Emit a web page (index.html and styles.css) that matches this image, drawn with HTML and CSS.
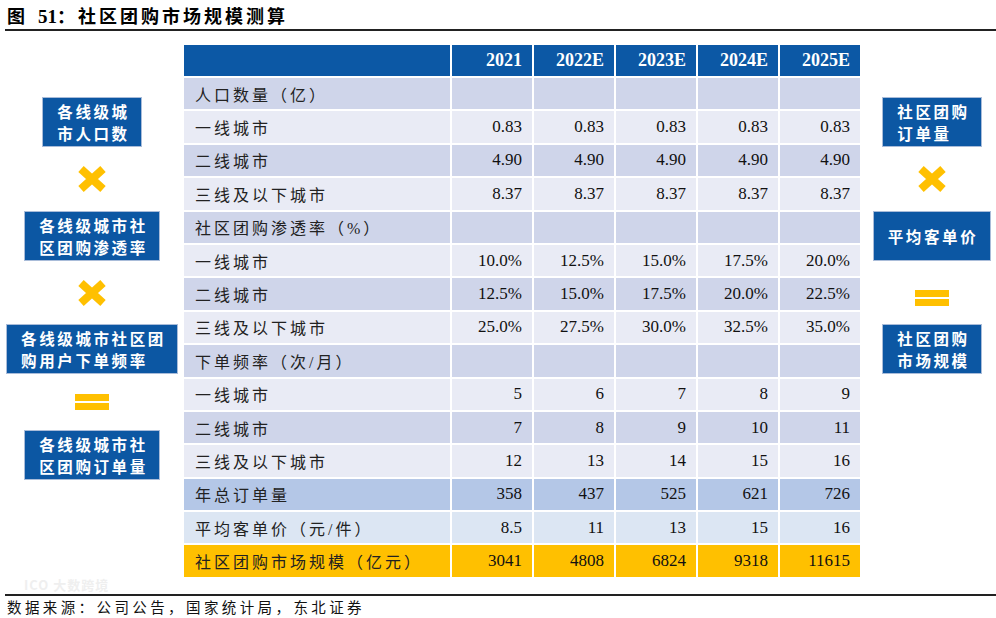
FILE: index.html
```html
<!DOCTYPE html>
<html lang="zh-CN">
<head>
<meta charset="utf-8">
<title>社区团购市场规模测算</title>
<link rel="stylesheet" href="styles.css">
</head>
<body>
<div class="page">
  <div class="title"><span class="t-cjk">图</span><span class="t-num">51</span><span class="t-cjk">：社区团购市场规模测算</span></div>
  <div class="main">
    <div class="side left">
      <div class="box">各线级城<br>市人口数</div>
      <div class="slot s64"><svg class="cross" width="30" height="28" viewBox="0 0 30 28"><path d="M4 4L26 24M26 4L4 24"/></svg></div>
      <div class="box">各线级城市社<br>区团购渗透率</div>
      <div class="slot s63"><svg class="cross" width="30" height="28" viewBox="0 0 30 28"><path d="M4 4L26 24M26 4L4 24"/></svg></div>
      <div class="box">各线级城市社区团<br>购用户下单频率</div>
      <div class="slot s56"><div class="eq"><i></i><i></i></div></div>
      <div class="box">各线级城市社<br>区团购订单量</div>
    </div>

    <div class="tbl">
      <div class="row head"><div class="c lab"></div><div class="c">2021</div><div class="c">2022E</div><div class="c">2023E</div><div class="c">2024E</div><div class="c">2025E</div></div>
      <div class="row dk"><div class="c lab">人口数量（亿）</div><div class="c"></div><div class="c"></div><div class="c"></div><div class="c"></div><div class="c"></div></div>
      <div class="row lt"><div class="c lab">一线城市</div><div class="c">0.83</div><div class="c">0.83</div><div class="c">0.83</div><div class="c">0.83</div><div class="c">0.83</div></div>
      <div class="row dk"><div class="c lab">二线城市</div><div class="c">4.90</div><div class="c">4.90</div><div class="c">4.90</div><div class="c">4.90</div><div class="c">4.90</div></div>
      <div class="row lt"><div class="c lab">三线及以下城市</div><div class="c">8.37</div><div class="c">8.37</div><div class="c">8.37</div><div class="c">8.37</div><div class="c">8.37</div></div>
      <div class="row dk"><div class="c lab">社区团购渗透率（%）</div><div class="c"></div><div class="c"></div><div class="c"></div><div class="c"></div><div class="c"></div></div>
      <div class="row lt"><div class="c lab">一线城市</div><div class="c">10.0%</div><div class="c">12.5%</div><div class="c">15.0%</div><div class="c">17.5%</div><div class="c">20.0%</div></div>
      <div class="row dk"><div class="c lab">二线城市</div><div class="c">12.5%</div><div class="c">15.0%</div><div class="c">17.5%</div><div class="c">20.0%</div><div class="c">22.5%</div></div>
      <div class="row lt"><div class="c lab">三线及以下城市</div><div class="c">25.0%</div><div class="c">27.5%</div><div class="c">30.0%</div><div class="c">32.5%</div><div class="c">35.0%</div></div>
      <div class="row dk"><div class="c lab">下单频率（次/月）</div><div class="c"></div><div class="c"></div><div class="c"></div><div class="c"></div><div class="c"></div></div>
      <div class="row lt"><div class="c lab">一线城市</div><div class="c">5</div><div class="c">6</div><div class="c">7</div><div class="c">8</div><div class="c">9</div></div>
      <div class="row dk"><div class="c lab">二线城市</div><div class="c">7</div><div class="c">8</div><div class="c">9</div><div class="c">10</div><div class="c">11</div></div>
      <div class="row lt"><div class="c lab">三线及以下城市</div><div class="c">12</div><div class="c">13</div><div class="c">14</div><div class="c">15</div><div class="c">16</div></div>
      <div class="row t1"><div class="c lab">年总订单量</div><div class="c">358</div><div class="c">437</div><div class="c">525</div><div class="c">621</div><div class="c">726</div></div>
      <div class="row t2"><div class="c lab">平均客单价（元/件）</div><div class="c">8.5</div><div class="c">11</div><div class="c">13</div><div class="c">15</div><div class="c">16</div></div>
      <div class="row t3"><div class="c lab">社区团购市场规模（亿元）</div><div class="c">3041</div><div class="c">4808</div><div class="c">6824</div><div class="c">9318</div><div class="c">11615</div></div>
    </div>

    <div class="side right">
      <div class="box">社区团购<br>订单量</div>
      <div class="slot s64"><svg class="cross" width="30" height="28" viewBox="0 0 30 28"><path d="M4 4L26 24M26 4L4 24"/></svg></div>
      <div class="box single">平均客单价</div>
      <div class="slot s63 low"><div class="eq"><i></i><i></i></div></div>
      <div class="box">社区团购<br>市场规模</div>
    </div>
  </div>
  <div class="source">数据来源：公司公告，国家统计局，东北证券</div>
  <div class="wm">ICO 大数跨境</div>
</div>
</body>
</html>
```

FILE: styles.css
```css
* { box-sizing: border-box; }
html, body { margin: 0; padding: 0; background: #fff; }
body {
  width: 996px;
  height: 618px;
  overflow: hidden;
  font-family: "Noto Sans CJK SC", sans-serif;
  color: #111;
}
.page { position: relative; width: 996px; height: 618px; }

.title {
  margin-left: 5px;
  height: 31px;
  padding: 2px 0 0 2px;
  border-bottom: 2px solid #222;
  font-size: 18px;
  font-weight: 700;
  line-height: 26px;
  color: #000;
}
.t-cjk { font-family: "Noto Sans CJK SC", sans-serif; letter-spacing: 3px; }
.t-num { font-family: "Liberation Serif", serif; font-size: 19px; margin-left: 10px; }

.main {
  display: flex;
  margin-top: 14px;
  height: 533px;
}

.side {
  display: flex;
  flex-direction: column;
  align-items: center;
  padding-top: 52px;
}
.left { width: 184px; }
.right { width: 136px; padding-left: 8px; }

.box {
  background: #0c57a3;
  border: 1px solid #a9bcd9;
  color: #fff;
  font-weight: 700;
  font-size: 15.5px;
  line-height: 22.5px;
  letter-spacing: 2.6px;
  height: 50px;
  padding: 1.5px 11px 0 14px;
  white-space: nowrap;
}
.box.single { padding-top: 12.5px; padding-left: 14px; padding-right: 12px; }

.slot { display: flex; align-items: center; justify-content: center; }
.s64 { height: 64px; }
.s63 { height: 63px; }
.s56 { height: 56px; }
.low { padding-top: 10px; }

.cross path { stroke: #ffc000; stroke-width: 8; fill: none; }

.eq { display: flex; flex-direction: column; gap: 2px; }
.eq i { display: block; width: 34px; height: 7px; background: #ffc000; }

.tbl {
  width: 676px;
  display: flex;
  flex-direction: column;
  gap: 2px;
}
.row {
  display: grid;
  grid-template-columns: 266px repeat(5, 80px);
  column-gap: 2px;
  height: 31.4px;
}
.row.head { height: 31px; }
.c {
  display: flex;
  align-items: center;
  justify-content: flex-end;
  padding-right: 10px;
  font-family: "Liberation Serif", serif;
  font-size: 17px;
  color: #111;
}
.c.lab {
  justify-content: flex-start;
  padding-left: 11px;
  padding-right: 0;
  font-family: "Liberation Serif", "Noto Sans CJK SC", serif;
  font-size: 16px;
  letter-spacing: 3px;
  color: #222;
}
.head .c { background: #0c58a5; color: #fff; font-weight: 700; font-size: 18px; }
.dk .c { background: #cfd5ea; }
.lt .c { background: #e9ebf5; }
.t1 .c { background: #b4c7e7; }
.t2 .c { background: #dce6f3; }
.t3 .c { background: #ffc000; }

.source {
  margin-left: 5px;
  margin-top: 16px;
  border-top: 2px solid #222;
  padding: 0 0 0 2px;
  font-size: 14.5px;
  line-height: 21px;
  letter-spacing: 3.4px;
  color: #111;
}

.wm {
  position: absolute;
  left: 24px;
  top: 575px;
  font-size: 13px;
  font-weight: 700;
  line-height: 19px;
  color: #efefef;
  letter-spacing: 1px;
}
```
